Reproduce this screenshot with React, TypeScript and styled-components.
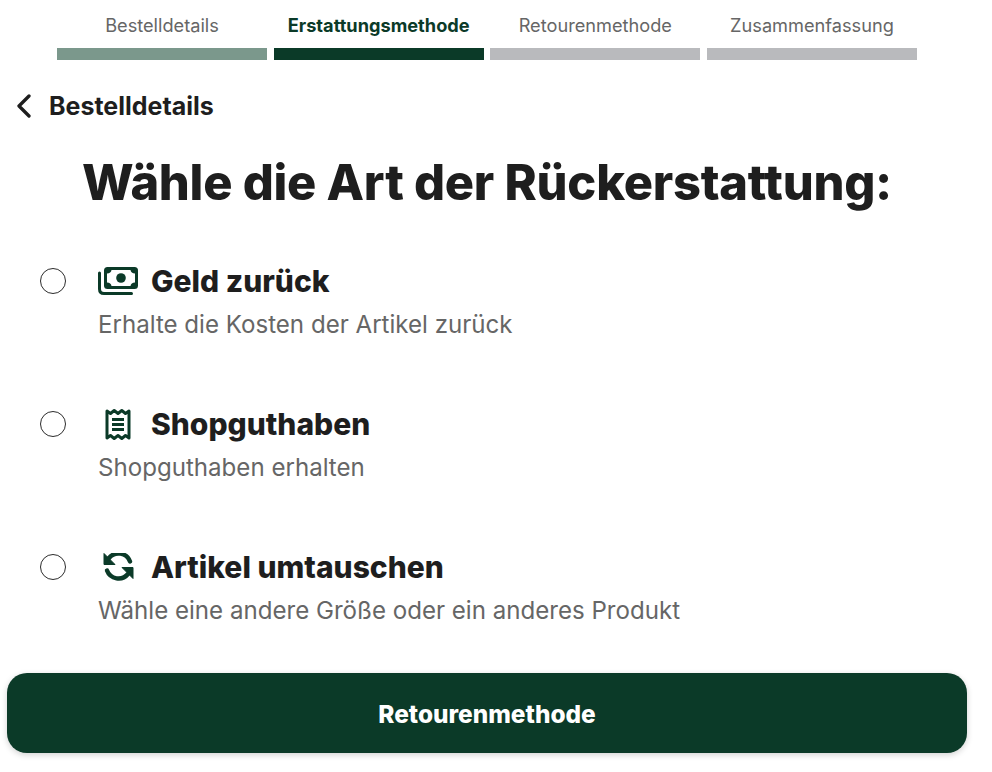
import React from "react";
import styled, { createGlobalStyle } from "styled-components";

const Global = createGlobalStyle`
  html, body { margin: 0; padding: 0; background: #fff; }
  body { font-family: Inter, "Liberation Sans", sans-serif; color: #1e1e1e; }
  * { box-sizing: border-box; }
`;

const Page = styled.div`
  width: 992px;
  height: 772px;
  overflow: hidden;
  padding-top: 14px;
`;

const Steps = styled.div`
  display: grid;
  grid-template-columns: repeat(4, 210px);
  justify-content: space-between;
  width: 860px;
  margin-left: 57px;
`;

const Step = styled.div`
  display: flex;
  flex-direction: column;
  align-items: center;
  gap: 12px;
`;

const StepLabel = styled.span<{ $active?: boolean }>`
  font-size: 18.2px;
  line-height: 22px;
  white-space: nowrap;
  font-weight: ${(p) => (p.$active ? 700 : 400)};
  color: ${(p) => (p.$active ? "#0b3a28" : "#666666")};
`;

const StepBar = styled.div<{ $color: string }>`
  width: 100%;
  height: 12px;
  background: ${(p) => p.$color};
`;

const Back = styled.div`
  display: flex;
  align-items: center;
  gap: 17px;
  margin: 31px 0 0 16px;
  height: 30px;
  font-size: 25px;
  font-weight: 700;
  color: #1e1e1e;
`;

const Heading = styled.h1`
  margin: 31px 0 0;
  text-align: center;
  font-size: 48.8px;
  line-height: 62px;
  font-weight: 800;
  letter-spacing: -0.25px;
  color: #1e1e1e;
  padding-right: 18px;
  white-space: nowrap;
`;

const Options = styled.div`
  display: flex;
  flex-direction: column;
  gap: 75px;
  margin: 48px 0 0 40px;
`;

const Option = styled.label`
  display: flex;
  gap: 32px;
  height: 68px;
`;

const Radio = styled.span`
  flex: none;
  width: 26px;
  height: 26px;
  margin-top: 6px;
  border-radius: 50%;
  border: 1px solid #2c2c2c;
  background: #fff;
`;

const OptionBody = styled.div`
  display: flex;
  flex-direction: column;
`;

const OptionHead = styled.div`
  display: flex;
  align-items: center;
  height: 38px;
`;

const IconSlot = styled.span`
  display: flex;
  align-items: center;
  justify-content: center;
  width: 53px;
  height: 38px;
  padding-right: 13px;
  color: #0b3a28;
`;

const OptionTitle = styled.span`
  font-size: 30px;
  font-weight: 800;
  color: #1e1e1e;
  white-space: nowrap;
`;

const OptionText = styled.div`
  margin-top: 11px;
  font-size: 24.1px;
  line-height: 28px;
  color: #666666;
  white-space: nowrap;
`;

const Submit = styled.button`
  display: block;
  width: 960px;
  height: 80px;
  margin: 57px 0 0 7px;
  padding: 2px 0 0;
  border: 0;
  border-radius: 20px;
  background: #0b3a28;
  color: #fff;
  font-family: inherit;
  font-size: 24.4px;
  font-weight: 800;
  box-shadow: 0 2px 6px rgba(0, 0, 0, 0.18);
`;

const Chevron = () => (
  <svg width="16" height="24" viewBox="0 0 16 24" fill="none">
    <path d="M13 2 L3 12 L13 22" stroke="#1e1e1e" strokeWidth="3.3" strokeLinecap="round" strokeLinejoin="round" />
  </svg>
);

const MoneyIcon = () => (
  <svg width="40" height="28" viewBox="0 0 40 28" fill="none">
    <path d="M1.5 6 V22 Q1.5 26.5 6 26.5 H33.5" stroke="currentColor" strokeWidth="3" strokeLinecap="round" />
    <rect x="6" y="0" width="34" height="22" rx="3.5" fill="currentColor" />
    <path d="M13.5 3 H32.5 Q33 6.2 37 6.5 V15.5 Q33 15.8 32.5 19 H13.5 Q13 15.8 9 15.5 V6.5 Q13 6.2 13.5 3 Z" fill="#fff" />
    <circle cx="23" cy="11" r="4.8" fill="currentColor" />
  </svg>
);

const ReceiptIcon = () => (
  <svg width="26" height="33" viewBox="0 0 26 33" fill="none">
    <path
      d="M2 3 L5.5 5.5 L9.2 2.5 L13 5.5 L16.8 2.5 L20.5 5.5 L24 3 V30 L20.5 27.5 L16.8 30.5 L13 27.5 L9.2 30.5 L5.5 27.5 L2 30 Z"
      stroke="currentColor"
      strokeWidth="3"
      strokeLinejoin="round"
    />
    <path d="M7 11.5 H19 M7 16.5 H19 M7 21.5 H19" stroke="currentColor" strokeWidth="3" />
  </svg>
);

const SwapArrow = () => (
  <>
    <path d="M1 2 L1 13 L12 13 Z" fill="currentColor" stroke="currentColor" strokeWidth="1" strokeLinejoin="round" />
    <path d="M6 6.5 A12.3 12.3 0 0 1 27 10" stroke="currentColor" strokeWidth="4.4" strokeLinecap="round" />
  </>
);

const SwapIcon = () => (
  <svg width="31" height="29" viewBox="0 1.5 31 29" fill="none">
    <SwapArrow />
    <g transform="rotate(180 15.5 14.5)">
      <SwapArrow />
    </g>
  </svg>
);

const steps = [
  { label: "Bestelldetails", color: "#7b988c" },
  { label: "Erstattungsmethode", color: "#0b3a28", active: true },
  { label: "Retourenmethode", color: "#b9babd" },
  { label: "Zusammenfassung", color: "#b9babd" },
];

const options = [
  { title: "Geld zurück", text: "Erhalte die Kosten der Artikel zurück", icon: <MoneyIcon /> },
  { title: "Shopguthaben", text: "Shopguthaben erhalten", icon: <ReceiptIcon /> },
  { title: "Artikel umtauschen", text: "Wähle eine andere Größe oder ein anderes Produkt", icon: <SwapIcon /> },
];

export default function App() {
  return (
    <Page>
      <Global />
      <Steps>
        {steps.map((s) => (
          <Step key={s.label}>
            <StepLabel $active={s.active}>{s.label}</StepLabel>
            <StepBar $color={s.color} />
          </Step>
        ))}
      </Steps>
      <Back>
        <Chevron />
        Bestelldetails
      </Back>
      <Heading>Wähle die Art der Rückerstattung:</Heading>
      <Options>
        {options.map((o) => (
          <Option key={o.title}>
            <Radio />
            <OptionBody>
              <OptionHead>
                <IconSlot>{o.icon}</IconSlot>
                <OptionTitle>{o.title}</OptionTitle>
              </OptionHead>
              <OptionText>{o.text}</OptionText>
            </OptionBody>
          </Option>
        ))}
      </Options>
      <Submit>Retourenmethode</Submit>
    </Page>
  );
}
